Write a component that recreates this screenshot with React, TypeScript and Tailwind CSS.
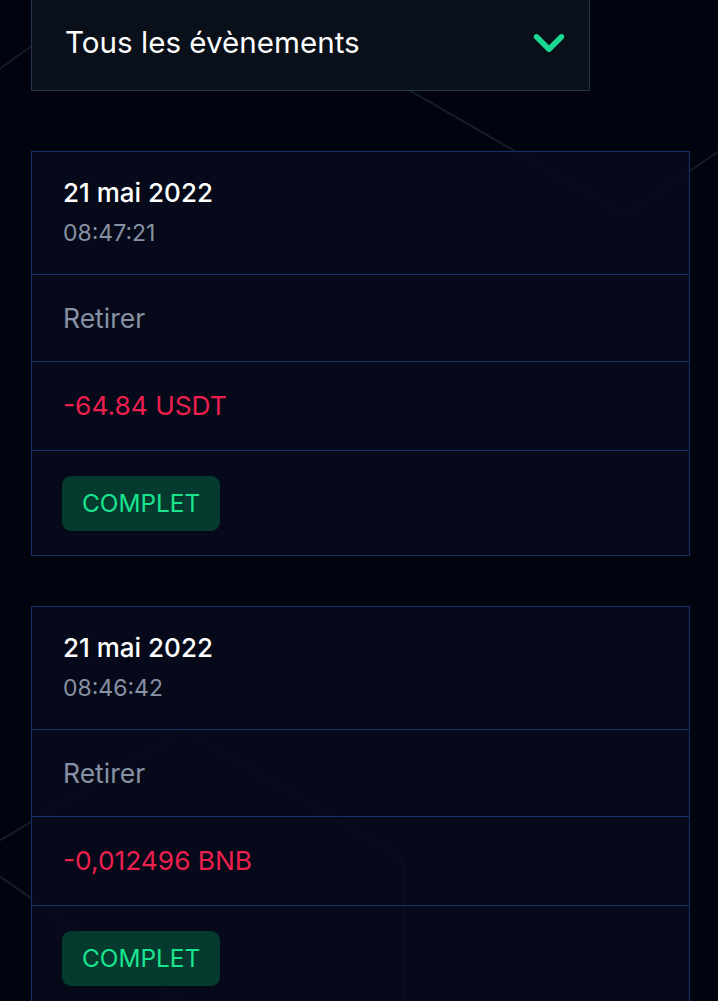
import { ChevronDown } from "lucide-react";

interface Tx {
  date: string;
  time: string;
  kind: string;
  amount: string;
  status: string;
}

const TXS: Tx[] = [
  { date: "21 mai 2022", time: "08:47:21", kind: "Retirer", amount: "-64.84 USDT", status: "Complet" },
  { date: "21 mai 2022", time: "08:46:42", kind: "Retirer", amount: "-0,012496 BNB", status: "Complet" },
];

function Backdrop() {
  return (
    <svg
      className="pointer-events-none absolute inset-0 h-full w-full"
      viewBox="0 0 718 1001"
      preserveAspectRatio="none"
      fill="none"
      stroke="rgba(150,170,210,0.14)"
      strokeWidth="2"
    >
      <polyline points="0,68 60,25" />
      <polyline points="400,84 626,213 718,150" />
      <polyline points="0,832 185,723 403,850 403,1001" />
      <polyline points="0,868 183,993 183,1001" />
    </svg>
  );
}

function TxCard({ tx }: { tx: Tx }) {
  return (
    <div className="border border-[#12326a] bg-[#060b1b]/80">
      <div className="flex h-[122px] flex-col pl-[31px] pt-[25px]">
        <span className="text-[26px] font-medium leading-[32px] text-white">{tx.date}</span>
        <span className="mt-[12px] text-[23px] leading-[24px] text-[#8891a3]">{tx.time}</span>
      </div>
      <div className="flex h-[87px] items-center border-t border-[#12326a] pl-[31px]">
        <span className="text-[26.5px] leading-[32px] text-[#8891a3]">{tx.kind}</span>
      </div>
      <div className="flex h-[89px] items-center border-t border-[#12326a] pl-[31px]">
        <span className="text-[26.3px] leading-[32px] text-[#ec1f4f]">{tx.amount}</span>
      </div>
      <div className="flex h-[105px] items-center border-t border-[#12326a] pl-[30px]">
        <span className="flex h-[55px] items-center rounded-[9px] bg-[#053a2e] px-[20px] text-[24.4px] uppercase text-[#19e591]">
          {tx.status}
        </span>
      </div>
    </div>
  );
}

export default function App() {
  return (
    <div className="relative min-h-[1001px] overflow-hidden bg-[#01040f] pl-[31px] pr-[28px] font-['Inter',sans-serif]">
      <Backdrop />
      <div className="relative">
        <div className="-mt-[8px] flex h-[99px] w-[559px] items-center justify-between border border-[#263650] bg-[#0a1019] pl-[33px] pr-[15px] pt-[2px]">
          <span className="text-[29.6px] text-white">Tous les évènements</span>
          <ChevronDown className="h-[50px] w-[50px] text-[#1ad992]" strokeWidth={2.6} />
        </div>
        <div className="mt-[60px] flex flex-col gap-[50px]">
          {TXS.map((tx, i) => (
            <TxCard key={i} tx={tx} />
          ))}
        </div>
      </div>
    </div>
  );
}
